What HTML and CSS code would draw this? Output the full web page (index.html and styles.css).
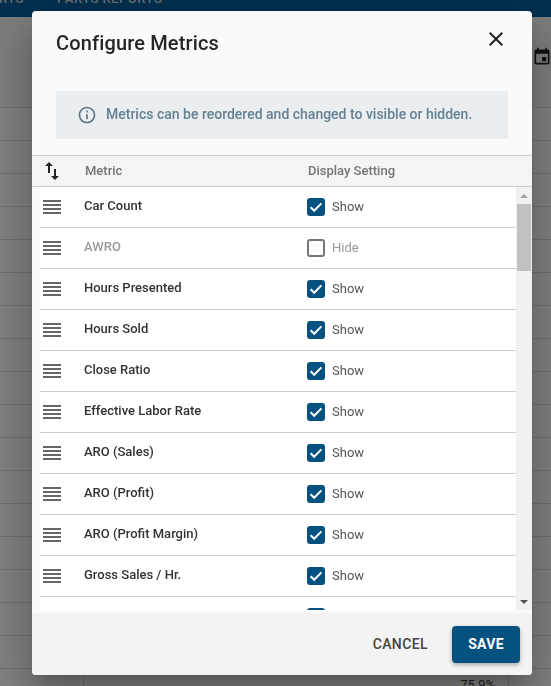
FILE: index.html
```html
<!DOCTYPE html>
<html>
<head>
    <meta name="viewport" content="width=device-width, initial-scale=1.0">
    <title>Configure Metrics</title>
    <link rel="stylesheet" href="styles.css">
</head>
<body>
    <div class="page">
        <div class="topbar">
            <span class="nav-item">RTS</span>
            <span class="nav-item nav-parts">PARTS REPORTS</span>
        </div>
        <div class="page-head">
            <svg class="calendar" viewBox="0 0 24 24" width="24" height="24"><path d="M17 12h-5v5h5v-5zM16 1v2H8V1H6v2H5c-1.11 0-1.99.9-1.99 2L3 19c0 1.1.89 2 2 2h14c1.1 0 2-.9 2-2V5c0-1.1-.9-2-2-2h-1V1h-2zm3 18H5V8h14v11z"/></svg>
        </div>
        <div class="bg-table">
            <div class="bg-row"></div><div class="bg-row"></div><div class="bg-row"></div>
            <div class="bg-row"></div><div class="bg-row"></div><div class="bg-row"></div>
            <div class="bg-row"></div><div class="bg-row"></div><div class="bg-row"></div>
            <div class="bg-row"></div><div class="bg-row"></div><div class="bg-row"></div>
            <div class="bg-row"></div><div class="bg-row"></div><div class="bg-row"></div>
            <div class="bg-row"></div><div class="bg-row"></div>
            <div class="bg-row bg-last">
                <div class="bg-cell-name"></div>
                <div class="bg-cell-value">75.9%</div>
            </div>
        </div>
    </div>

    <div class="overlay"></div>

    <div class="modal">
        <div class="modal-header">
            <h2 class="modal-title">Configure Metrics</h2>
            <svg class="close-icon" viewBox="0 0 24 24" width="24" height="24"><path d="M19 6.41 17.59 5 12 10.59 6.41 5 5 6.41 10.59 12 5 17.59 6.41 19 12 13.41 17.59 19 19 17.59 13.41 12z"/></svg>
        </div>

        <div class="info-box">
            <svg class="info-icon" viewBox="0 0 24 24" width="20" height="20"><path d="M11 7h2v2h-2zm0 4h2v6h-2zm1-9C6.48 2 2 6.48 2 12s4.48 10 10 10 10-4.48 10-10S17.52 2 12 2zm0 18c-4.41 0-8-3.59-8-8s3.59-8 8-8 8 3.59 8 8-3.59 8-8 8z"/></svg>
            <span class="info-text">Metrics can be reordered and changed to visible or hidden.</span>
        </div>

        <div class="table-head">
            <svg class="sort-icon" viewBox="0 0 24 24" width="24" height="24"><path d="M16 17.01V10h-2v7.01h-3L15 21l4-3.99h-3zM9 3 5 6.99h3V14h2V6.99h3L9 3z"/></svg>
            <span class="col-metric">Metric</span>
            <span class="col-setting">Display Setting</span>
        </div>

        <div class="list-wrap">
            <div class="list" id="list"></div>
            <div class="scrollbar">
                <div class="arrow arrow-up"></div>
                <div class="track"><div class="thumb"></div></div>
                <div class="arrow arrow-down"></div>
            </div>
        </div>

        <div class="modal-footer">
            <button class="btn-cancel">CANCEL</button>
            <button class="btn-save">SAVE</button>
        </div>
    </div>

    <script>
        const metrics = [
            ['Car Count', true],
            ['AWRO', false],
            ['Hours Presented', true],
            ['Hours Sold', true],
            ['Close Ratio', true],
            ['Effective Labor Rate', true],
            ['ARO (Sales)', true],
            ['ARO (Profit)', true],
            ['ARO (Profit Margin)', true],
            ['Gross Sales / Hr.', true],
            ['Gross Profit / Hr.', true]
        ];

        const list = document.getElementById('list');

        metrics.forEach(([name, visible]) => {
            const row = document.createElement('div');
            row.className = visible ? 'row' : 'row row-off';
            row.innerHTML = `
                <div class="drag"><i></i><i></i><i></i><i></i></div>
                <div class="metric-name">${name}</div>
                <div class="checkbox ${visible ? 'checked' : ''}">
                    ${visible ? '<svg viewBox="0 0 18 18" width="18" height="18"><path d="M3.6 9.2 7.2 12.8 14.4 5.4" fill="none" stroke="#fff" stroke-width="2"/></svg>' : ''}
                </div>
                <div class="setting">${visible ? 'Show' : 'Hide'}</div>
            `;
            list.appendChild(row);
        });
    </script>
</body>
</html>
```

FILE: styles.css
```css
body {
    margin: 0;
    height: 686px;
    overflow: hidden;
    background: #fff;
    font-family: Roboto, "Liberation Sans", sans-serif;
}

.page {
    height: 686px;
    overflow: hidden;
}

.topbar {
    height: 17px;
    background: #065f9c;
    display: flex;
    overflow: hidden;
    color: #d0dbe3;
    font-size: 13px;
    font-weight: 500;
    line-height: 1;
    letter-spacing: 0.5px;
}

.nav-item {
    margin-top: -8px;
    margin-left: -1px;
}

.nav-parts {
    margin-left: 33px;
}

.page-head {
    height: 91px;
    box-sizing: border-box;
    background: #f7f8f8;
    border-bottom: 1px solid #ddd;
    display: flex;
    justify-content: flex-end;
    padding: 30px 0 0 0;
}

.calendar {
    margin-right: -1px;
    width: 20px;
    height: 20px;
    fill: #222;
}

.bg-table {
    background: #fff;
}

.bg-row {
    height: 33px;
    box-sizing: border-box;
    border-bottom: 1px solid #ddd;
}

.bg-last {
    display: flex;
    font-size: 13px;
    color: #333;
}

.bg-cell-name {
    width: 84px;
    box-sizing: border-box;
    border-right: 1px solid #ddd;
}

.bg-cell-value {
    width: 425px;
    box-sizing: border-box;
    padding: 8px 13px 0 0;
    text-align: right;
    border-right: 1px solid #ddd;
}

.overlay {
    position: fixed;
    inset: 0;
    background: rgba(0, 0, 0, 0.5);
}

.modal {
    position: fixed;
    left: 32px;
    top: 11px;
    width: 500px;
    height: 664px;
    display: flex;
    flex-direction: column;
    background: #fafafa;
    border-radius: 4px;
    overflow: hidden;
    box-shadow: 0 11px 15px -7px rgba(0, 0, 0, 0.2), 0 24px 38px 3px rgba(0, 0, 0, 0.14), 0 9px 46px 8px rgba(0, 0, 0, 0.12);
}

.modal-header {
    height: 80px;
    flex: none;
    display: flex;
    justify-content: space-between;
    align-items: flex-start;
    padding: 0 32px 0 24px;
}

.modal-title {
    margin: 20px 0 0;
    font-size: 20px;
    line-height: 24px;
    font-weight: 500;
    color: #262626;
    letter-spacing: 0.15px;
}

.close-icon {
    margin-top: 16px;
    margin-right: -8px;
    fill: #212121;
}

.info-box {
    height: 48px;
    flex: none;
    margin: 0 24px;
    padding-left: 21px;
    display: flex;
    align-items: center;
    gap: 9px;
    background: #eaeef1;
    color: #648092;
    font-size: 14px;
    font-weight: 500;
}

.info-text {
    margin-top: -2px;
}

.info-icon {
    fill: #5b7586;
}

.table-head {
    height: 32px;
    flex: none;
    box-sizing: border-box;
    margin-top: 16px;
    display: flex;
    align-items: center;
    background: #f4f4f4;
    border-top: 1px solid #ccc;
    border-bottom: 1px solid #ccc;
    font-size: 13px;
    font-weight: 500;
    color: #757575;
}

.sort-icon {
    margin-left: 8px;
    fill: #222;
}

.col-metric {
    margin-left: 21px;
    width: 223px;
    margin-top: -2px;
}

.col-setting {
    margin-top: -2px;
}

.list-wrap {
    height: 423px;
    flex: none;
    display: flex;
    padding-left: 8px;
}

.list {
    flex: 1;
    background: #fff;
    overflow: hidden;
}

.row {
    height: 41px;
    box-sizing: border-box;
    display: flex;
    align-items: center;
    padding-bottom: 2px;
    border-bottom: 1px solid #ccc;
    color: #333;
    font-size: 13px;
}

.row-off .metric-name,
.row-off .setting {
    color: #999;
}

.drag {
    margin-left: 3px;
    margin-top: 2px;
    width: 18px;
    display: flex;
    flex-direction: column;
    gap: 2px;
}

.drag i {
    display: block;
    height: 2px;
    background: #666;
}

.metric-name {
    margin-left: 23px;
    width: 223px;
    margin-top: -2px;
    font-weight: 500;
}

.checkbox {
    width: 18px;
    height: 18px;
    margin-top: 2px;
    box-sizing: border-box;
    border: 2px solid #757575;
    border-radius: 3px;
}

.checkbox.checked {
    border: none;
    background: #05517f;
}

.setting {
    margin-left: 7px;
    color: #555;
}

.scrollbar {
    width: 16px;
    flex: none;
    display: flex;
    flex-direction: column;
    background: #f1f1f1;
}

.arrow {
    height: 17px;
    flex: none;
    display: flex;
    justify-content: center;
    align-items: center;
}

.arrow-up::after {
    content: "";
    border: 4px solid transparent;
    border-top: none;
    border-bottom: 4px solid #a3a3a3;
}

.arrow-down::after {
    content: "";
    border: 4px solid transparent;
    border-bottom: none;
    border-top: 4px solid #505050;
}

.track {
    flex: 1;
    padding: 0 1px;
}

.thumb {
    height: 67px;
    background: #c1c1c1;
}

.modal-footer {
    margin-top: 3px;
    flex: 1;
    display: flex;
    justify-content: flex-end;
    align-items: center;
    gap: 24px;
    padding-right: 12px;
    background: #f3f3f3;
}

.btn-cancel {
    border: none;
    background: none;
    padding: 0;
    font-family: inherit;
    font-size: 14px;
    font-weight: 500;
    letter-spacing: 0.4px;
    color: #444;
}

.btn-save {
    width: 68px;
    height: 37px;
    border: none;
    border-radius: 4px;
    background: #05517f;
    color: #fff;
    font-family: inherit;
    font-size: 14px;
    font-weight: 700;
    letter-spacing: 0.3px;
    box-shadow: 0 2px 4px rgba(0, 0, 0, 0.3);
}
```
